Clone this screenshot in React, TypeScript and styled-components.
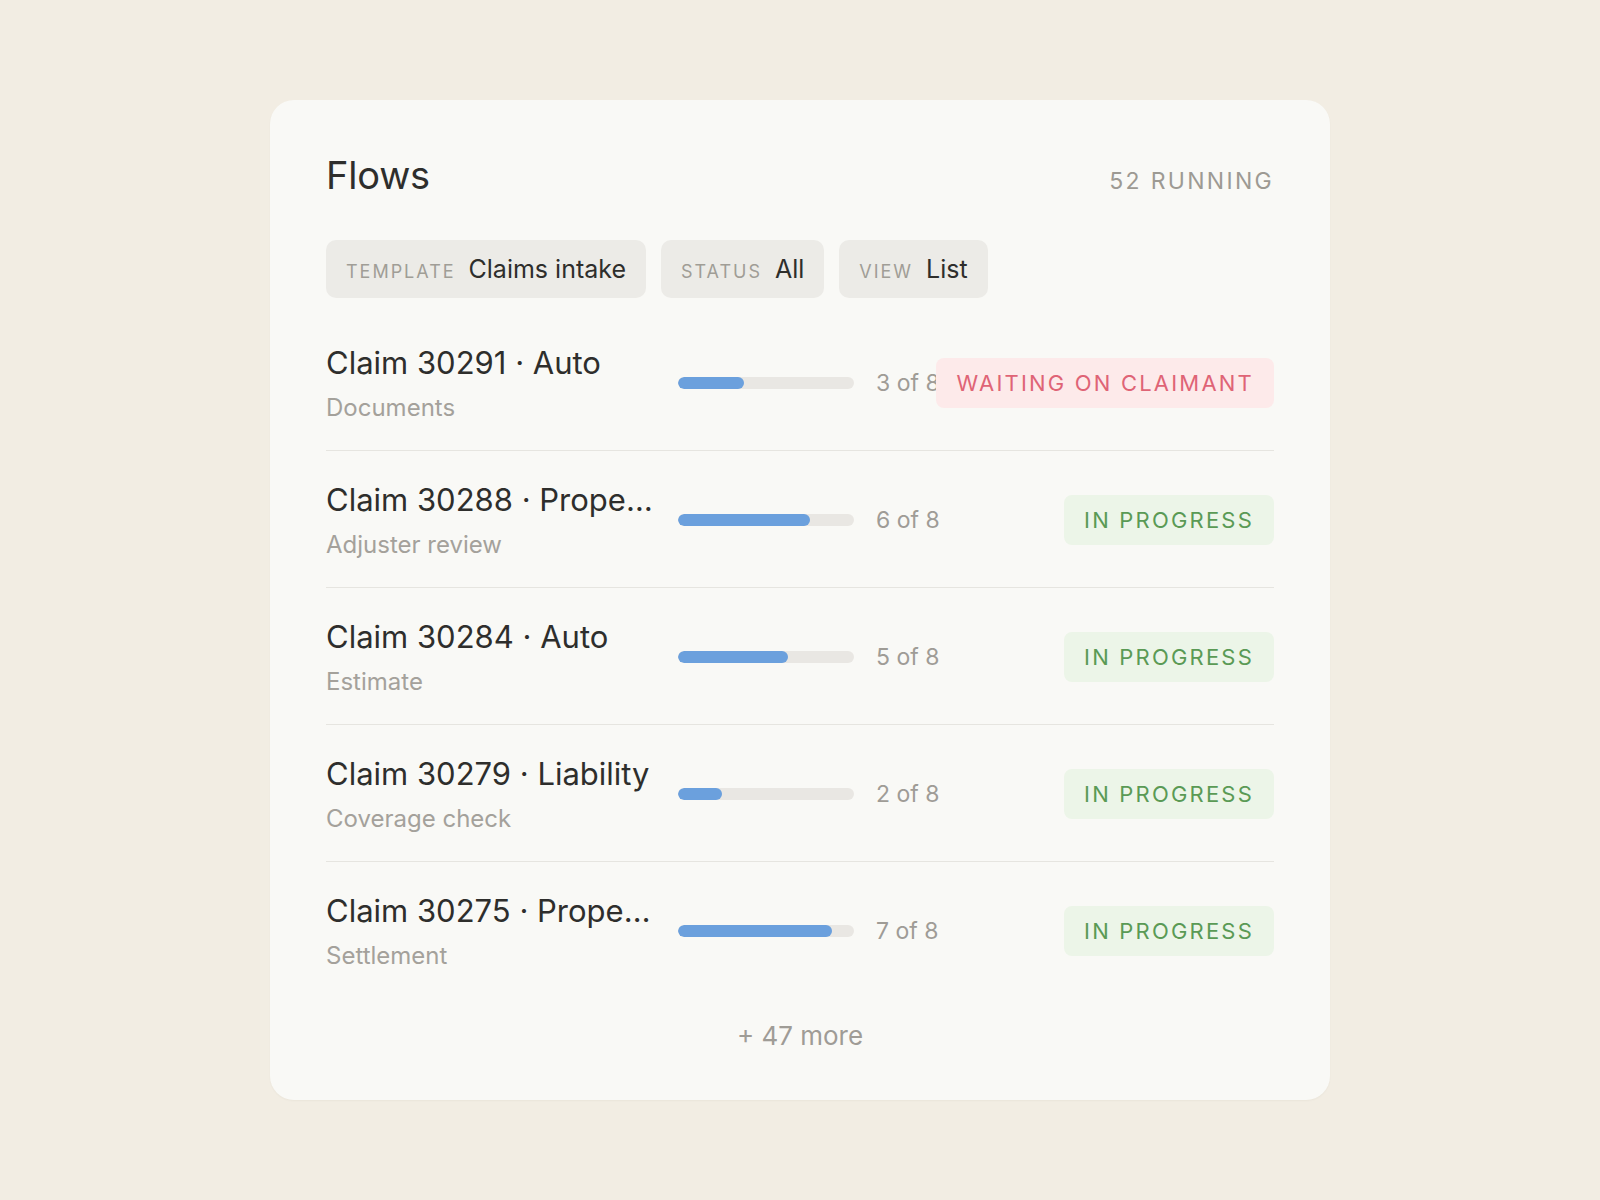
import styled, { createGlobalStyle } from 'styled-components';

type Tone = 'waiting' | 'progress';

interface Flow {
  id: number;
  kind: string;
  step: string;
  done: number;
  total: number;
  status: string;
  tone: Tone;
}

const FLOWS: Flow[] = [
  { id: 30291, kind: 'Auto', step: 'Documents', done: 3, total: 8, status: 'Waiting on claimant', tone: 'waiting' },
  { id: 30288, kind: 'Property', step: 'Adjuster review', done: 6, total: 8, status: 'In progress', tone: 'progress' },
  { id: 30284, kind: 'Auto', step: 'Estimate', done: 5, total: 8, status: 'In progress', tone: 'progress' },
  { id: 30279, kind: 'Liability', step: 'Coverage check', done: 2, total: 8, status: 'In progress', tone: 'progress' },
  { id: 30275, kind: 'Property', step: 'Settlement', done: 7, total: 8, status: 'In progress', tone: 'progress' }
];

const TONES: Record<Tone, { fg: string; bg: string }> = {
  waiting: { fg: '#df6476', bg: '#fdeaea' },
  progress: { fg: '#5a9a55', bg: '#ecf5e8' }
};

const GlobalStyle = createGlobalStyle`
  * {
    box-sizing: border-box;
  }

  body {
    margin: 0;
    background-color: #f2ede3;
    font-family: Inter, 'Noto Sans', 'Liberation Sans', sans-serif;
    color: #2e2e2c;
  }
`;

const Page = styled.main`
  display: flex;
  justify-content: center;
  align-items: center;
  min-height: 100vh;
`;

const Card = styled.section`
  width: 1060px;
  padding: 56px 56px 51px;
  border-radius: 24px;
  background-color: #f9f9f6;
  box-shadow: 0 1px 2px rgba(60, 50, 30, 0.04);
`;

const Header = styled.header`
  display: flex;
  justify-content: space-between;
  align-items: baseline;
`;

const Title = styled.h1`
  margin: 0;
  font-weight: 400;
  font-size: 38px;
  line-height: 1;
  letter-spacing: -0.005em;
`;

const Running = styled.span`
  font-size: 23px;
  letter-spacing: 0.1em;
  text-transform: uppercase;
  color: #9d9a93;
`;

const Filters = styled.div`
  display: flex;
  gap: 15px;
  margin-top: 45px;
`;

const Chip = styled.button`
  display: inline-flex;
  align-items: baseline;
  gap: 13px;
  padding: 14px 20px;
  border: none;
  border-radius: 10px;
  background-color: #ecebe7;
  font-family: inherit;
  cursor: pointer;
`;

const ChipLabel = styled.span`
  font-size: 18px;
  letter-spacing: 0.11em;
  text-transform: uppercase;
  color: #a09d96;
`;

const ChipValue = styled.span`
  font-size: 25px;
  line-height: 30px;
  color: #2e2e2c;
`;

const List = styled.ul`
  margin: 16px 0 0;
  padding: 0;
  list-style: none;
`;

const Row = styled.li`
  display: flex;
  align-items: center;
  gap: 22px;
  padding: 28px 0 27px;
  border-bottom: 1px solid #e6e5e0;

  &:last-child {
    border-bottom: none;
  }
`;

const Info = styled.div`
  flex-shrink: 0;
  width: 330px;
  min-width: 0;
  margin-top: 3px;
`;

const RowTitle = styled.div`
  overflow: hidden;
  font-size: 31px;
  line-height: 36px;
  white-space: nowrap;
  text-overflow: ellipsis;
  color: #2e2e2c;
`;

const RowStep = styled.div`
  margin-top: 12px;
  font-size: 24px;
  line-height: 30px;
  color: #a4a19b;
`;

const Track = styled.div`
  flex-shrink: 0;
  width: 176px;
  height: 12px;
  border-radius: 6px;
  background-color: #e9e7e3;
  overflow: hidden;
`;

const Fill = styled.div`
  height: 100%;
  border-radius: 6px;
  background-color: #6ba0dd;
`;

const StepCount = styled.span`
  flex: 1 1 auto;
  min-width: 0;
  font-size: 23px;
  white-space: nowrap;
  color: #9f9c96;
`;

const Badge = styled.span<{ tone: Tone }>`
  flex-shrink: 0;
  padding: 12px 20px;
  border-radius: 8px;
  font-size: 22px;
  line-height: 26px;
  letter-spacing: 0.1em;
  text-transform: uppercase;
  color: ${({ tone }) => TONES[tone].fg};
  background-color: ${({ tone }) => TONES[tone].bg};
`;

const More = styled.div`
  margin-top: 25px;
  font-size: 26px;
  line-height: 26px;
  text-align: center;
  color: #9f9c96;
`;

function FlowRow({ flow }: { flow: Flow }) {
  const { id, kind, step, done, total, status, tone } = flow;

  return (
    <Row>
      <Info>
        <RowTitle>
          Claim {id} · {kind}
        </RowTitle>
        <RowStep>{step}</RowStep>
      </Info>
      <Track>
        <Fill style={{ width: `${(done / total) * 100}%` }} />
      </Track>
      <StepCount>
        {done} of {total}
      </StepCount>
      <Badge tone={tone}>{status}</Badge>
    </Row>
  );
}

function App() {
  return (
    <>
      <GlobalStyle />
      <Page>
        <Card>
          <Header>
            <Title>Flows</Title>
            <Running>52 running</Running>
          </Header>
          <Filters>
            <Chip type="button">
              <ChipLabel>Template</ChipLabel>
              <ChipValue>Claims intake</ChipValue>
            </Chip>
            <Chip type="button">
              <ChipLabel>Status</ChipLabel>
              <ChipValue>All</ChipValue>
            </Chip>
            <Chip type="button">
              <ChipLabel>View</ChipLabel>
              <ChipValue>List</ChipValue>
            </Chip>
          </Filters>
          <List>
            {FLOWS.map((flow) => (
              <FlowRow key={flow.id} flow={flow} />
            ))}
          </List>
          <More>+ 47 more</More>
        </Card>
      </Page>
    </>
  );
}

export default App;
